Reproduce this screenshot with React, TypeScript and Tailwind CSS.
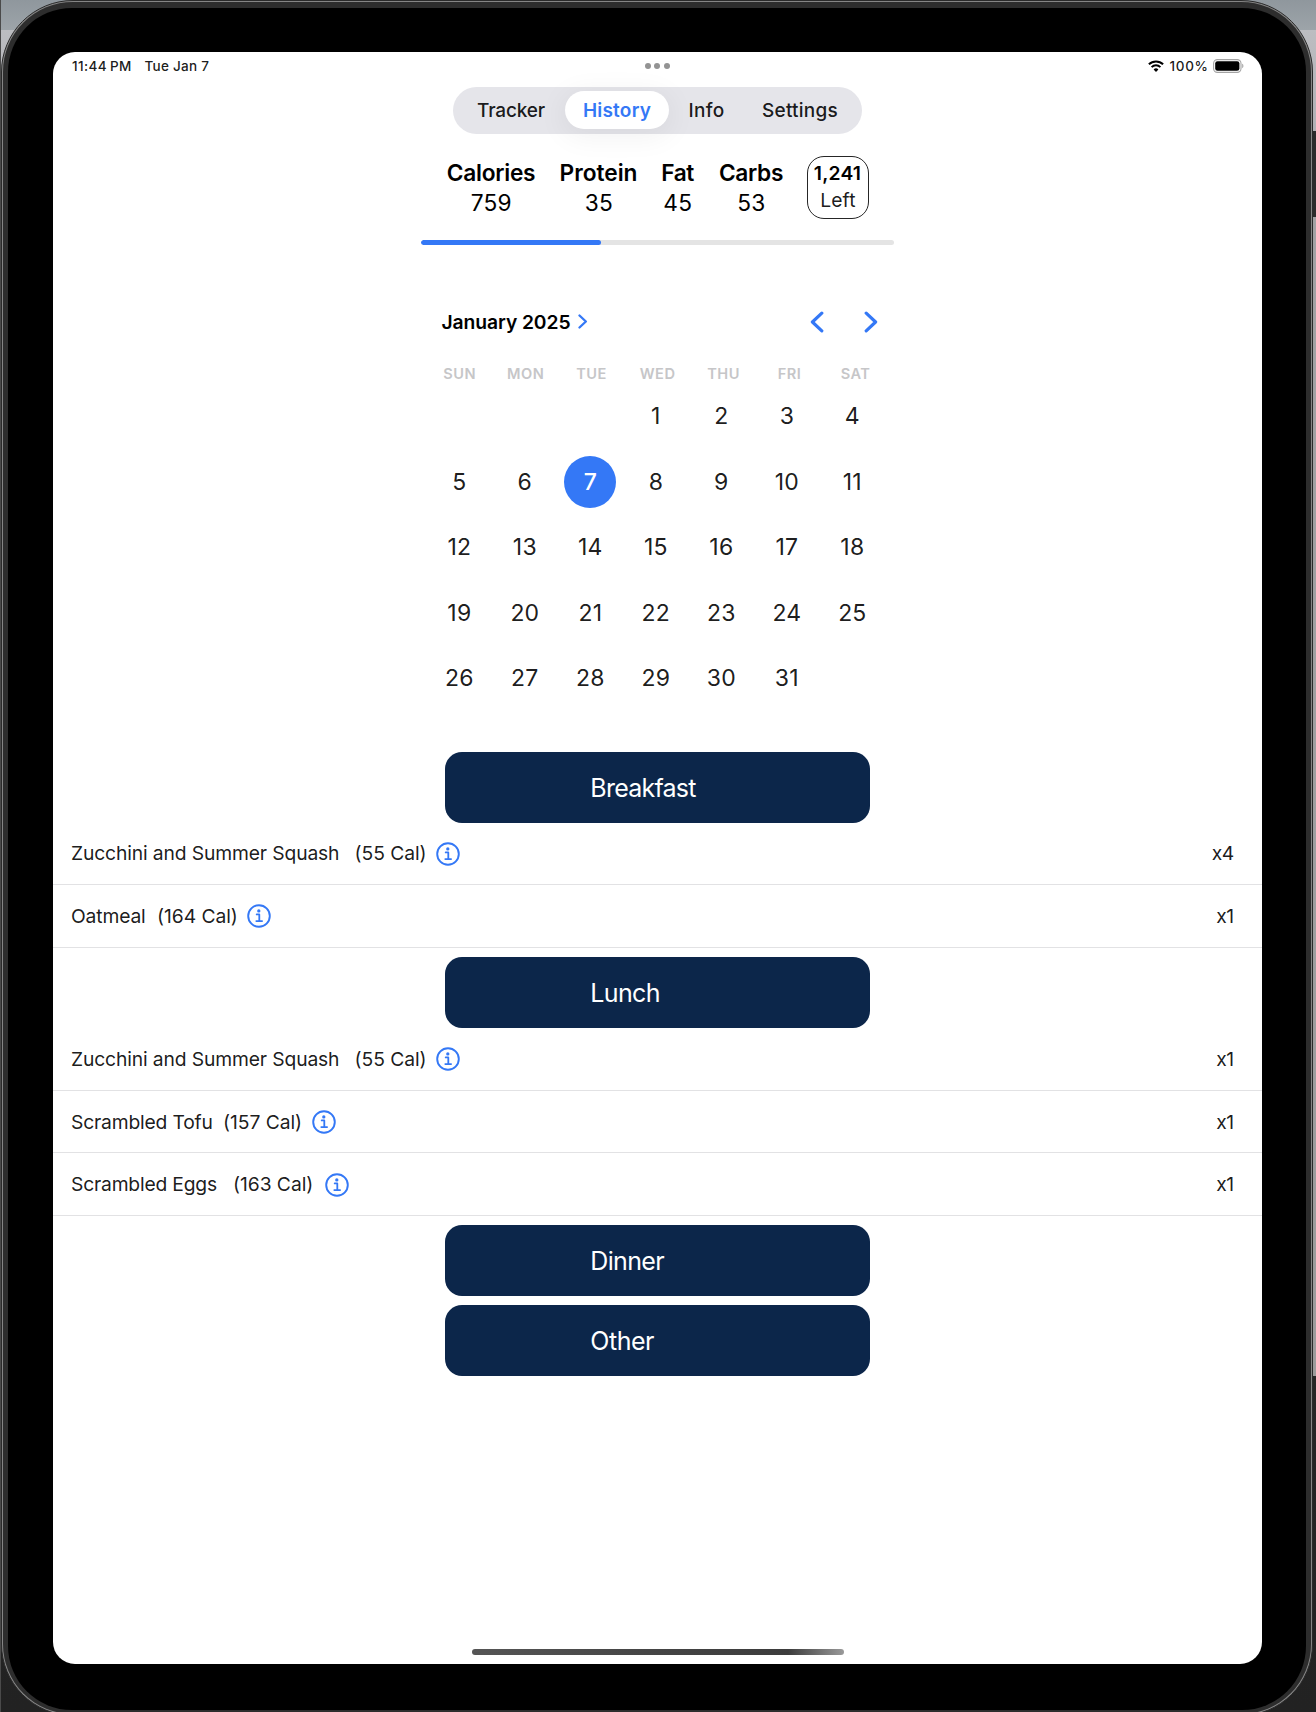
const TABS = [
  { label: "Tracker", box: "w-[91px] ml-[12.5px] mr-[8.5px]", text: "font-medium text-black/90 tracking-[-0.18px]" },
  { label: "History", box: "w-[104px] bg-white shadow-[0_5px_28px_4px_rgba(0,0,0,0.05)]", text: "font-semibold text-[#3478f6] tracking-[0.22px]" },
  { label: "Info", box: "w-[75px]", text: "font-medium text-black/90 tracking-[0.3px]" },
  { label: "Settings", box: "w-[112px]", text: "font-medium text-black/90 tracking-[0.22px]" },
];

const MACROS = [
  { label: "Calories", value: "759", box: "w-[88px]", text: "tracking-[-0.23px]" },
  { label: "Protein", value: "35", box: "w-[76px] ml-[25.5px]", text: "tracking-[-0.02px]" },
  { label: "Fat", value: "45", box: "w-[34px] ml-[24px]", text: "tracking-[-0.45px]" },
  { label: "Carbs", value: "53", box: "w-[64px] ml-[24.5px]", text: "tracking-[-0.3px]" },
];

const WEEKDAYS = ["SUN", "MON", "TUE", "WED", "THU", "FRI", "SAT"];
const SELECTED_DAY = 7;

type Food = { name: string; cal: string; qty: string; name_w: string; cal_w: string };

const ZUCCHINI = {
  name: "Zucchini and Summer Squash",
  cal: "(55 Cal)",
  name_w: "w-[283.5px] tracking-[-0.14px]",
  cal_w: "w-[81.5px]",
};

const MEALS: { title: string; text: string; gap: string; foods: Food[] }[] = [
  {
    title: "Breakfast",
    text: "tracking-[-0.76px]",
    gap: "",
    foods: [
      { ...ZUCCHINI, qty: "x4" },
      { name: "Oatmeal", cal: "(164 Cal)", qty: "x1", name_w: "w-[86px] tracking-[-0.15px]", cal_w: "w-[90px]" },
    ],
  },
  {
    title: "Lunch",
    text: "tracking-[-0.65px]",
    gap: "mt-[9.7px]",
    foods: [
      { ...ZUCCHINI, qty: "x1" },
      { name: "Scrambled Tofu", cal: "(157 Cal)", qty: "x1", name_w: "w-[152px] tracking-[-0.19px]", cal_w: "w-[89px]" },
      { name: "Scrambled Eggs", cal: "(163 Cal)", qty: "x1", name_w: "w-[162px] tracking-[-0.2px]", cal_w: "w-[91.5px]" },
    ],
  },
  { title: "Dinner", text: "tracking-[-0.65px]", gap: "mt-[9.2px]", foods: [] },
  { title: "Other", text: "tracking-[-0.46px]", gap: "mt-[9.5px]", foods: [] },
];

function InfoIcon() {
  return (
    <svg className="size-6 shrink-0 text-[#3478f6]" viewBox="0 0 24 24" fill="none" stroke="currentColor">
      <circle cx="12" cy="12" r="10.8" strokeWidth="1.9" />
      <circle cx="11.8" cy="6.9" r="1.65" fill="currentColor" stroke="none" />
      <path d="M9.7 10.4h2.6v6.6M9.3 17.1h5.8" strokeWidth="1.8" strokeLinecap="round" strokeLinejoin="round" />
    </svg>
  );
}

function Chevron({ className, flip, weight }: { className: string; flip?: boolean; weight: number }) {
  return (
    <svg className={className} viewBox="0 0 14 22" fill="none" stroke="#3478f6" strokeWidth={weight} strokeLinecap="round" strokeLinejoin="round">
      <path d={flip ? "M11.8 2.2 2.4 11l9.4 8.8" : "M2.2 2.2 11.6 11l-9.4 8.8"} />
    </svg>
  );
}

function StatusBar() {
  return (
    <div className="grid h-[28px] shrink-0 grid-cols-3 items-center pr-[18px] pl-[19px] text-[13.5px] font-medium text-black/90">
      <div className="flex items-center">
        <span className="w-[38px] tracking-[0.4px]">11:44</span>
        <span className="w-[34.5px] tracking-[0.3px]">PM</span>
        <span className="tracking-[0.26px]">Tue Jan 7</span>
      </div>
      <div className="-ml-[1.5px] flex justify-center gap-[3.5px]">
        {[0, 1, 2].map((i) => (
          <span key={i} className="size-[6px] rounded-full bg-[#939393]" />
        ))}
      </div>
      <div className="flex items-center justify-end">
        <svg className="h-[12px] w-[16px]" viewBox="0 0 16 12">
          <g fill="none" stroke="#000" strokeWidth="2">
            <path d="M.9 4.3a10.1 10.1 0 0 1 14.2 0" />
            <path d="M3.6 7.1a6.3 6.3 0 0 1 8.8 0" />
          </g>
          <path d="M5.6 9.4a3.4 3.4 0 0 1 4.8 0L8 11.9z" fill="#000" />
        </svg>
        <span className="ml-[5px] w-[43.5px] tracking-[0.7px]">100%</span>
        <svg className="h-[14px] w-[31px]" viewBox="0 0 31 14">
          <rect x=".6" y=".6" width="27.4" height="12.8" rx="3.8" fill="none" stroke="#a4a4a4" strokeWidth="1.1" />
          <rect x="2.2" y="2.2" width="24.2" height="9.6" rx="2.3" fill="#000" />
          <path d="M29.2 4.8c1.6.5 1.6 3.9 0 4.4z" fill="#a4a4a4" />
        </svg>
      </div>
    </div>
  );
}

function TabBar() {
  return (
    <nav className="mx-auto mt-[6.5px] flex h-[47px] w-[409px] shrink-0 items-center rounded-full bg-[#e5e5ea]">
      {TABS.map((t) => (
        <button key={t.label} className={`flex h-[38px] shrink-0 items-center justify-center rounded-full text-[19px] leading-none ${t.box}`}>
          <span className={t.text}>{t.label}</span>
        </button>
      ))}
    </nav>
  );
}

function Summary() {
  return (
    <section className="ml-[394px] mt-[22px] flex h-[63px] shrink-0 text-[22.7px] text-black">
      {MACROS.map((m) => (
        <div key={m.label} className={`flex shrink-0 flex-col items-center pt-[2px] leading-[30.3px] ${m.box}`}>
          <span className={`whitespace-nowrap font-semibold ${m.text}`}>{m.label}</span>
          <span className="ml-[0.6px] tracking-[0.2px]">{m.value}</span>
        </div>
      ))}
      <div className="ml-[23.5px] flex w-[62px] flex-col items-center rounded-[17px] border-[1.3px] border-black/85 pt-[3.5px] text-[19.3px] leading-[27px]">
        <span className="font-semibold tracking-[0.2px]">1,241</span>
        <span className="ml-[0.8px] tracking-[0.1px] text-black/90">Left</span>
      </div>
    </section>
  );
}

function Calendar() {
  const cells: (number | null)[] = [null, null, null, ...Array.from({ length: 31 }, (_, i) => i + 1)];
  return (
    <section className="mt-[60.5px] flex shrink-0 flex-col">
      <div className="ml-[388.5px] flex h-[32px] w-[436.8px] items-center">
        <h2 className="pt-px text-[19.3px] font-semibold tracking-[-0.08px] text-black">January 2025</h2>
        <Chevron className="ml-[7.5px] h-[15px] w-[9.5px]" weight={3.4} />
        <Chevron className="ml-auto h-[22px] w-[14px]" weight={3.2} flip />
        <Chevron className="ml-[40.5px] h-[22px] w-[14px]" weight={3.2} />
      </div>
      <div className="ml-[373.6px] mt-[25px] grid h-[20.8px] w-[462px] grid-cols-7 items-center pt-px text-center text-[14.6px] font-semibold tracking-[0.5px] text-[#c6c6c8]">
        {WEEKDAYS.map((d) => (
          <span key={d}>{d}</span>
        ))}
      </div>
      <div className="ml-[373.6px] grid w-[458.5px] auto-rows-[65.5px] grid-cols-7 place-items-center text-[23px] text-black/90">
        {cells.map((d, i) =>
          d === null ? (
            <span key={i} />
          ) : (
            <span
              key={i}
              className={
                d === SELECTED_DAY
                  ? "flex size-[52px] items-center justify-center rounded-full bg-[#3478f6] pt-px font-medium text-white"
                  : "flex size-[52px] items-center justify-center pt-px tracking-[0.2px]"
              }
            >
              {d}
            </span>
          ),
        )}
      </div>
    </section>
  );
}

function FoodRow({ food }: { food: Food }) {
  return (
    <div className="flex h-[62.6px] items-center whitespace-nowrap border-b border-[#e2e2e4] pt-px pr-[28.3px] pl-[18px] text-[19.3px] text-black/90">
      <span className={food.name_w}>{food.name}</span>
      <span className={`tracking-[-0.06px] ${food.cal_w}`}>{food.cal}</span>
      <InfoIcon />
      <span className="ml-auto tracking-[-0.5px]">{food.qty}</span>
    </div>
  );
}

export default function App() {
  return (
    <div className="h-[1712px] w-[1316px] overflow-hidden border-l border-[#4a4a4a] bg-[linear-gradient(to_bottom,#8f979d_0,#9da4a9_30px,#bcbdc1_30px,#b0b0b4_131px,#2b2b2b_131px,#2b2b2b_217px,#a2a2a4_217px,#9b9b9b_1376px,#262626_1376px,#222_1712px)] font-[Inter,sans-serif]">
      <div className="h-[1716px] w-[1312px] rounded-[72px] border border-[#2a2a2a] bg-[#858585] p-px">
        <div className="h-full rounded-[70px] bg-[#2d2d2d] px-[5px] pt-[5.5px] pb-[4px]">
          <div className="h-full rounded-[64px] bg-black px-[45px] pt-[44.5px]">
            <main className="flex h-[1612px] w-[1209px] flex-col overflow-hidden rounded-[22px] bg-white">
              <StatusBar />
              <TabBar />
              <Summary />
              <div className="ml-[368px] mt-[21.5px] h-[5px] w-[472.5px] shrink-0 overflow-hidden rounded-full bg-[#e4e4e4]">
                <div className="h-full w-[179.5px] rounded-full bg-[#3478f6]" />
              </div>
              <Calendar />
              <div className="mt-[41.1px] flex shrink-0 flex-col">
                {MEALS.map((m) => (
                  <section key={m.title} className={m.gap}>
                    <button className="mx-auto flex h-[70.7px] w-[425px] items-center rounded-[17px] bg-[#0c264a] pt-[2.2px] pl-[145.3px] text-[25px] leading-none text-white">
                      <span className={m.text}>{m.title}</span>
                    </button>
                    {m.foods.map((f) => (
                      <FoodRow key={f.name} food={f} />
                    ))}
                  </section>
                ))}
              </div>
              <div className="mx-auto mt-auto mb-[9px] h-[6px] w-[372px] shrink-0 rounded-full bg-[linear-gradient(to_right,#555,#444_50%,#3c3c3c_85%,#999)]" />
            </main>
          </div>
        </div>
      </div>
    </div>
  );
}
